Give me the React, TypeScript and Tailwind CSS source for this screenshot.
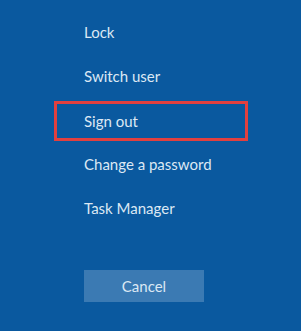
const items = ['Lock', 'Switch user', 'Sign out', 'Change a password', 'Task Manager'];

export default function App() {
  return (
    <div
      className="w-[301px] h-[331px] bg-[#0a599f] text-[#dce8f4] text-[15px] overflow-hidden"
      style={{ fontFamily: '"Segoe UI", Lato, "Noto Sans", sans-serif' }}
    >
      <div className="flex flex-col pt-[10px] pl-[54px]">
        {items.map((label) =>
          label === 'Sign out' ? (
            <div
              key={label}
              className="flex items-center w-[194px] h-[40px] mt-[3px] mb-[1px] pl-[27px] border-[3px] border-[#e2403f]"
            >
              {label}
            </div>
          ) : (
            <div key={label} className="flex items-center h-[44px] pl-[30px]">
              {label}
            </div>
          )
        )}
      </div>
      <div className="pl-[84px] pt-[40px]">
        <button className="w-[120px] h-[32px] bg-[#3b7ab3] text-[#dce8f4] text-[15px] flex items-center justify-center">
          Cancel
        </button>
      </div>
    </div>
  );
}
